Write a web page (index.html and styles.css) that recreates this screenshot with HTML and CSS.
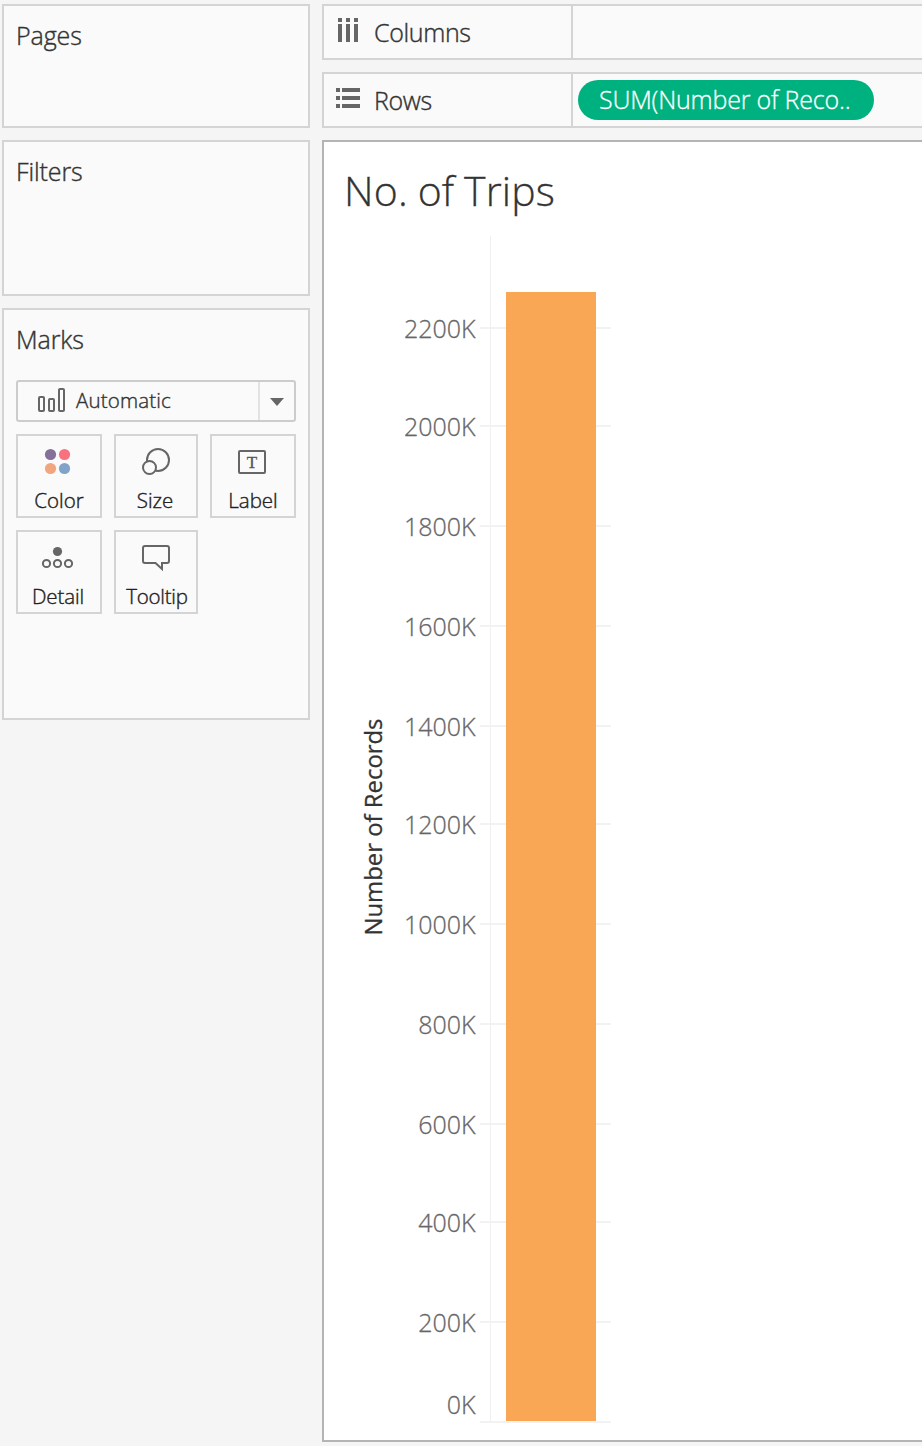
FILE: index.html
```html
<!DOCTYPE html>
<html lang="en">
<head>
<meta charset="utf-8">
<title>No. of Trips</title>
<link rel="stylesheet" href="styles.css">
</head>
<body>
<div class="workspace">
  <aside class="cards">
    <section class="card card-pages"><h2 class="heading">Pages</h2></section>
    <section class="card card-filters"><h2 class="heading">Filters</h2></section>
    <section class="card card-marks">
      <h2 class="heading">Marks</h2>
      <div class="mark-type">
        <div class="mark-value">
          <svg class="bars-icon" width="28" height="24" viewBox="0 0 28 24" fill="none" stroke="#666" stroke-width="2"><rect x="1" y="9" width="5" height="14" rx="1"/><rect x="11" y="11" width="5" height="12" rx="1"/><rect x="21" y="1" width="5" height="22" rx="1"/></svg>
          <span class="mark-name">Automatic</span>
        </div>
        <div class="mark-arrow"><svg width="14" height="8" viewBox="0 0 14 8"><path d="M0 0H14L7 8Z" fill="#666"/></svg></div>
      </div>
      <div class="mark-grid">
        <div class="mark-button">
          <svg width="36" height="30" viewBox="0 0 36 30"><circle cx="9.5" cy="8.5" r="5.6" fill="#857099"/><circle cx="23.5" cy="8.5" r="5.6" fill="#f9707f"/><circle cx="9.5" cy="22.5" r="5.6" fill="#f2a67e"/><circle cx="23.5" cy="22.5" r="5.6" fill="#81a3c9"/></svg>
          <span>Color</span>
        </div>
        <div class="mark-button">
          <svg width="32" height="30" viewBox="0 0 32 30" fill="#fafafa" stroke="#666" stroke-width="2"><circle cx="18" cy="14" r="11"/><circle cx="9.5" cy="21.5" r="6.5"/></svg>
          <span class="size-name">Size</span>
        </div>
        <div class="mark-button">
          <svg width="32" height="30" viewBox="0 0 32 30"><rect x="2" y="5" width="26" height="22" rx="1" fill="none" stroke="#666" stroke-width="2"/><text class="label-glyph" x="15" y="22" text-anchor="middle">T</text></svg>
          <span>Label</span>
        </div>
        <div class="mark-button">
          <svg width="36" height="30" viewBox="0 0 36 30" fill="none" stroke="#666" stroke-width="2"><circle cx="16.5" cy="9.5" r="4.6" fill="#666" stroke="none"/><circle cx="5.5" cy="21.5" r="3.6"/><circle cx="16.5" cy="21.5" r="3.6"/><circle cx="27.5" cy="21.5" r="3.6"/></svg>
          <span class="detail-name">Detail</span>
        </div>
        <div class="mark-button">
          <svg width="32" height="30" viewBox="0 0 32 30" fill="none" stroke="#666" stroke-width="2"><path d="M5 4H27Q29 4 29 6V19Q29 21 27 21H22V27L15.5 21H5Q3 21 3 19V6Q3 4 5 4Z"/></svg>
          <span class="tooltip-name">Tooltip</span>
        </div>
      </div>
    </section>
  </aside>
  <main class="main">
    <div class="shelf">
      <div class="shelf-name">
        <svg width="26" height="24" viewBox="0 0 26 24" fill="#666"><path d="M2 0h4v4H2zM10 0h4v4h-4zM18 0h4v4h-4zM2 6h4v18H2zM10 6h4v18h-4zM18 6h4v18h-4z"/></svg>
        <span>Columns</span>
      </div>
    </div>
    <div class="shelf">
      <div class="shelf-name">
        <svg width="26" height="24" viewBox="0 0 26 24" fill="#666"><path d="M0 2h4v4H0zM0 10h4v4H0zM0 18h4v4H0zM6 2h18v4H6zM6 10h18v4H6zM6 18h18v4H6z"/></svg>
        <span>Rows</span>
      </div>
      <div class="shelf-fields"><div class="pill">SUM(Number of Reco..</div></div>
    </div>
    <section class="sheet">
      <h1 class="title">No. of Trips</h1>
      <svg class="chart" width="300" height="1200" viewBox="324 230 300 1200">
        <path class="grid" d="M480 328H611M480 426H611M480 526H611M480 626H611M480 726H611M480 824H611M480 924H611M480 1024H611M480 1124H611M480 1222H611M480 1322H611M480 1422H611"/>
        <rect x="490" y="236" width="1" height="1185" fill="#f0f0f0"/>
        <rect x="506" y="292" width="90" height="1129" fill="#f9a755"/>
        <g class="ticks">
          <text x="475.5" y="338">2200K</text><text x="475.5" y="436">2000K</text><text x="475.5" y="536">1800K</text><text x="475.5" y="636">1600K</text><text x="475.5" y="736">1400K</text><text x="475.5" y="834">1200K</text><text x="475.5" y="934">1000K</text><text x="475.5" y="1034">800K</text><text x="475.5" y="1134">600K</text><text x="475.5" y="1232">400K</text><text x="475.5" y="1332">200K</text><text x="475.5" y="1414">0K</text>
        </g>
        <text class="axis-title" transform="translate(382 935.5) rotate(-90)" textLength="217" lengthAdjust="spacingAndGlyphs">Number of Records</text>
      </svg>
    </section>
  </main>
</div>
</body>
</html>
```
FILE: styles.css
```css
* { box-sizing: border-box; }
body { margin: 0; background: #f5f5f5; color: #333; font-family: "Open Sans", "Noto Sans", sans-serif; font-weight: 300; }
.workspace { display: flex; gap: 12px; height: 1446px; padding: 4px 0 4px 2px; overflow: hidden; }
.cards { display: flex; flex-direction: column; gap: 12px; width: 308px; flex: none; -webkit-text-stroke: 0.4px; }
.card { border: 2px solid #d4d4d4; background: #fafafa; padding: 11px 12px; }
.card-pages { height: 124px; }
.card-filters { height: 156px; }
.card-marks { height: 412px; }
.heading { margin: 0; font-size: 25px; line-height: 36px; font-weight: 300; font-stretch: 90%; letter-spacing: -0.1px; white-space: nowrap; }
.mark-type { display: flex; height: 42px; margin-top: 23px; border: 2px solid #ccc; border-radius: 3px; }
.mark-value { display: flex; align-items: center; flex: 1; padding-left: 20px; gap: 10px; font-size: 20.5px; font-stretch: 90%; letter-spacing: 0.15px; }
.mark-name { margin-top: -2px; }
.bars-icon { margin-top: -2px; }
.mark-arrow { display: flex; align-items: center; justify-content: center; width: 36px; padding-top: 2px; border-left: 2px solid #e2e2e2; }
.mark-grid { display: grid; grid-template-columns: 86px 84px 86px; gap: 12px; margin-top: 12px; }
.mark-button { display: flex; flex-direction: column; align-items: center; height: 84px; padding-top: 10px; border: 2px solid #d4d4d4; font-size: 20.5px; line-height: 28px; font-stretch: 90%; color: #222; }
.mark-button span { margin-top: 10px; }
.mark-button svg { flex: none; }
.mark-button .size-name { padding-right: 2px; }
.mark-button .detail-name { padding-right: 2px; letter-spacing: -0.1px; }
.mark-button .tooltip-name { padding-left: 2px; letter-spacing: -0.25px; }
.label-glyph { font: 17px "Liberation Serif", serif; fill: #555; stroke: #555; stroke-width: 0.3; }
.main { display: flex; flex-direction: column; flex: 1; min-width: 0; gap: 12px; }
.shelf { display: flex; flex: none; height: 56px; border: 2px solid #d4d4d4; border-right: 0; background: #fafafa; }
.shelf-name { display: flex; align-items: center; width: 249px; padding-left: 12px; gap: 12px; border-right: 2px solid #d4d4d4; font-size: 25px; line-height: 36px; font-stretch: 90%; letter-spacing: -0.35px; -webkit-text-stroke: 0.4px; }
.shelf-name span { margin-top: -1px; }
.shelf-name svg { margin-top: -4px; }
.shelf-fields { display: flex; align-items: center; padding: 0 5px; }
.pill { width: 296px; height: 40px; padding-left: 21px; border-radius: 20px; background: #00b180; color: #fff; font-size: 25px; line-height: 38px; font-stretch: 90%; letter-spacing: -0.2px; -webkit-text-stroke: 0.3px; white-space: nowrap; }
.sheet { flex: 1; border: 2px solid #b4b4b4; border-right: 0; background: #fff; }
.title { height: 88px; margin: 0; padding: 18px 0 0 20px; font-size: 41px; line-height: 60px; font-weight: 300; font-stretch: 90%; letter-spacing: 0.15px; word-spacing: -1px; -webkit-text-stroke: 0.3px; }
.chart { display: block; }
.grid { fill: none; stroke: #f2f2f2; stroke-width: 2; }
.ticks { font-size: 25px; font-weight: 300; fill: #666; stroke: #666; stroke-width: 0.3; text-anchor: end; }
.axis-title { font-size: 23.5px; font-weight: 400; fill: #333; stroke: #333; stroke-width: 0.3; }
```
